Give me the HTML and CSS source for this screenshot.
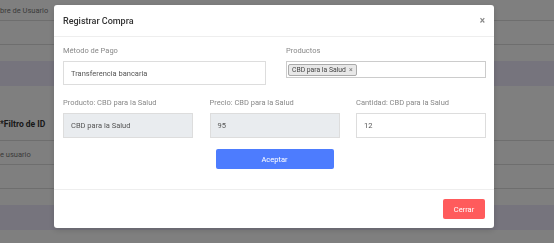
FILE: index.html
```html
<!DOCTYPE html>
<html lang="es">
<head>
  <meta charset="UTF-8">
  <meta name="viewport" content="width=device-width, initial-scale=1.0">
  <title>Registrar Compra</title>
  <link rel="stylesheet" href="styles.css">
</head>
<body>
  <div class="page">
    <div class="trow thead"><span class="cell">bre de Usuario</span></div>
    <div class="trow"></div>
    <div class="band band-top"></div>
    <div class="filter"><span class="filter-title">*Filtro de ID</span></div>
    <div class="trow trow-user"><span class="cell">e usuario</span></div>
    <div class="trow"></div>
    <div class="band band-bottom"></div>
  </div>

  <div class="overlay">
    <div class="modal">
      <div class="modal-header">
        <span class="modal-title">Registrar Compra</span>
        <span class="close">&times;</span>
      </div>

      <div class="modal-body">
        <div class="row-two">
          <div class="field">
            <label>Método de Pago</label>
            <div class="input">Transferencia bancaria</div>
          </div>
          <div class="field">
            <label>Productos</label>
            <div class="multi">
              <span class="tag">CBD para la Salud <span class="tag-x">&times;</span></span>
            </div>
          </div>
        </div>

        <div class="row-three">
          <div class="field">
            <label>Producto: CBD para la Salud</label>
            <div class="input disabled">CBD para la Salud</div>
          </div>
          <div class="field">
            <label>Precio: CBD para la Salud</label>
            <div class="input disabled">95</div>
          </div>
          <div class="field">
            <label>Cantidad: CBD para la Salud</label>
            <div class="input">12</div>
          </div>
        </div>

        <div class="actions">
          <button class="btn btn-primary">Aceptar</button>
        </div>
      </div>

      <div class="modal-footer">
        <button class="btn btn-danger">Cerrar</button>
      </div>
    </div>
  </div>
</body>
</html>
```

FILE: styles.css
```css
html, body {
  margin: 0;
  padding: 0;
  height: 100%;
  overflow: hidden;
}
body {
  font-family: Roboto, "Liberation Sans", sans-serif;
  background-color: #fff;
  color: #333;
}

/* pagina de fondo */
.page {
  width: 100%;
}
.trow {
  height: 23px;
  border-bottom: 1px solid #dcdcdc;
  display: flex;
  align-items: center;
  font-size: 7.5px;
  color: #777;
  white-space: nowrap;
}
.thead {
  height: 20px;
}
.trow-user {
  height: 24px;
  padding-top: 3px;
  box-sizing: border-box;
}
.band {
  height: 25px;
  background-color: #ece8fa;
}
.band-top {
  margin-top: 16px;
}
.band-bottom {
  margin-top: 16px;
}
.filter {
  height: 55px;
  border-bottom: 1px solid #dcdcdc;
  display: flex;
  align-items: flex-end;
  box-sizing: border-box;
}
.filter-title {
  font-size: 8.5px;
  font-weight: 700;
  color: #333;
  margin-bottom: 11px;
}

/* modal */
.overlay {
  position: fixed;
  inset: 0;
  background: rgba(0, 0, 0, 0.5);
}
.modal {
  width: 440px;
  margin: 5px 0 0 54px;
  background: white;
  border-radius: 3px;
  box-shadow: 0 2px 6px rgba(0, 0, 0, 0.15);
}
.modal-header {
  height: 31px;
  padding: 0 9px;
  border-bottom: 1px solid #eee;
  display: flex;
  align-items: center;
  justify-content: space-between;
}
.modal-title {
  font-size: 9px;
  font-weight: 500;
  color: #333;
}
.close {
  font-size: 10px;
  color: #888;
  font-weight: 700;
}
.modal-body {
  padding: 9px 8px 20px 9px;
}
.row-two {
  display: grid;
  grid-template-columns: 203px 1fr;
  column-gap: 20px;
}
.row-three {
  display: grid;
  grid-template-columns: 1fr 1fr 1fr;
  column-gap: 16.5px;
  margin-top: 13px;
}
.field label {
  display: block;
  font-size: 7.5px;
  line-height: 10px;
  color: #888;
  margin-bottom: 5px;
}
.input {
  height: 24px;
  border: 1px solid #ddd;
  box-sizing: border-box;
  padding: 0 7px;
  display: flex;
  align-items: center;
  font-size: 7.5px;
  color: #555;
}
.row-three .input {
  height: 25px;
}
.input.disabled {
  background-color: #e9ecef;
}
.multi {
  height: 17px;
  border: 1px solid #ccc;
  box-sizing: border-box;
  padding: 0 1px;
  display: flex;
  align-items: center;
}
.tag {
  height: 12px;
  box-sizing: border-box;
  border: 1px solid #aaa;
  border-radius: 2px;
  background: #e8e8e8;
  padding: 0 3px;
  display: flex;
  align-items: center;
  font-size: 6.8px;
  color: #444;
}
.tag-x {
  margin-left: 3px;
  color: #777;
  font-size: 7px;
}
.actions {
  display: flex;
  justify-content: center;
  margin-top: 11px;
}
.btn {
  height: 20px;
  border: none;
  border-radius: 2px;
  color: white;
  font-family: Roboto, "Liberation Sans", sans-serif;
  font-size: 7.5px;
  cursor: pointer;
}
.btn-primary {
  width: 118px;
  background: #4d7cfe;
}
.btn-danger {
  width: 42px;
  background: #ff5b5c;
}
.modal-footer {
  border-top: 1px solid #eee;
  padding: 9px;
  display: flex;
  justify-content: flex-end;
}
```
